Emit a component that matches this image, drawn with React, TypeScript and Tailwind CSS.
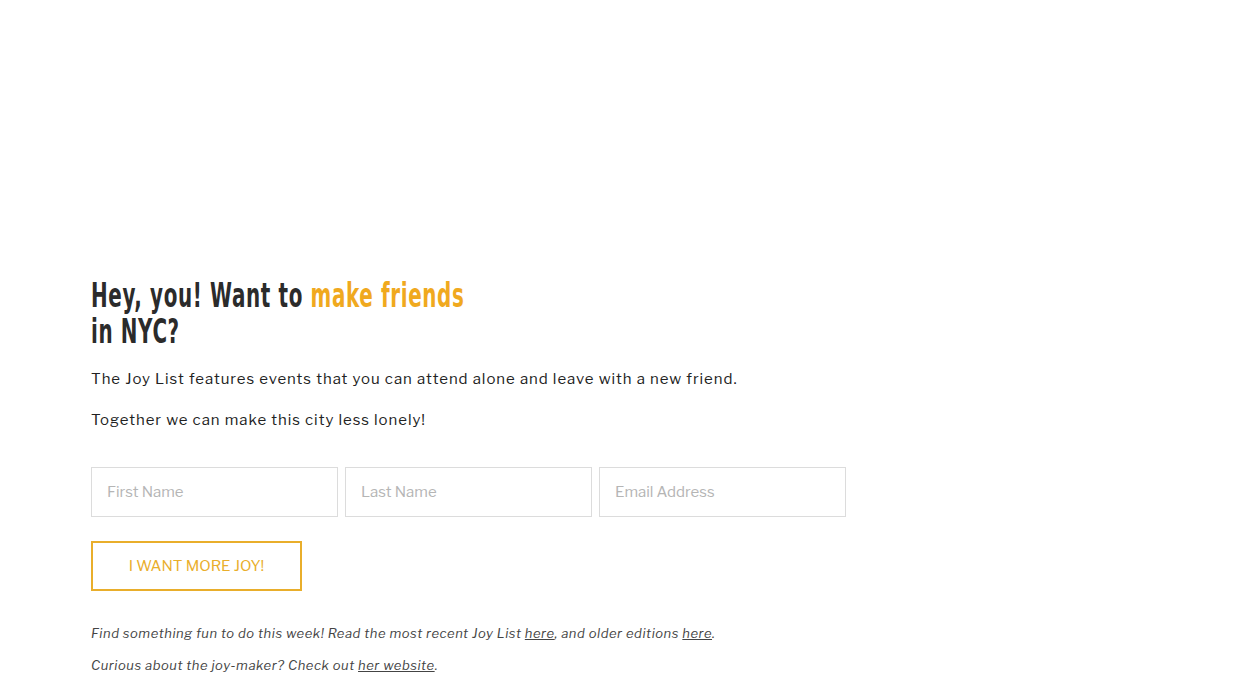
import React from "react";

export default function App() {
  const body = { fontFamily: '"Libre Franklin", "Open Sans", "Liberation Sans", sans-serif' };
  return (
    <div className="min-h-[700px] bg-white">
      <div className="pl-[91px] pt-[277px]">
        <h1
          className="origin-left scale-x-[0.65] whitespace-nowrap text-[34px] leading-[36px] text-[#2b2b2b] font-bold [font-stretch:condensed] tracking-[1px]"
          style={{ fontFamily: '"DejaVu Sans", sans-serif' }}
        >
          Hey, you! Want to <span className="text-[#f0a91e]">make friends</span>
          <br />
          in NYC?
        </h1>
        <div style={body} className="text-[15px] text-[#222] tracking-[0.95px]">
          <p className="mt-[18px] leading-[24px]">The Joy List features events that you can attend alone and leave with a new friend.</p>
          <p className="mt-[17px] leading-[24px]">Together we can make this city less lonely!</p>
        </div>
        <form style={body} className="mt-[35px]" onSubmit={(e) => e.preventDefault()}>
          <div className="flex gap-[7px]">
            {["First Name", "Last Name", "Email Address"].map((p) => (
              <input
                key={p}
                placeholder={p}
                className="w-[247px] h-[50px] border border-[#dcdcdc] px-[15px] text-[15px] placeholder:text-[#b5b5b5] outline-none"
              />
            ))}
          </div>
          <button className="mt-[24px] w-[211px] h-[50px] border-2 border-[#e9ae2b] text-[#e9ae2b] text-[15px] uppercase">
            I want more joy!
          </button>
        </form>
        <div style={body} className="mt-[32px] italic text-[13px] text-[#444] tracking-[0.55px]">
          <p className="leading-[20px]">
            Find something fun to do this week! Read the most recent Joy List <a className="underline">here</a>, and older editions <a className="underline">here</a>.
          </p>
          <p className="mt-[12px] leading-[20px]">
            Curious about the joy-maker? Check out <a className="underline">her website</a>.
          </p>
        </div>
      </div>
    </div>
  );
}
